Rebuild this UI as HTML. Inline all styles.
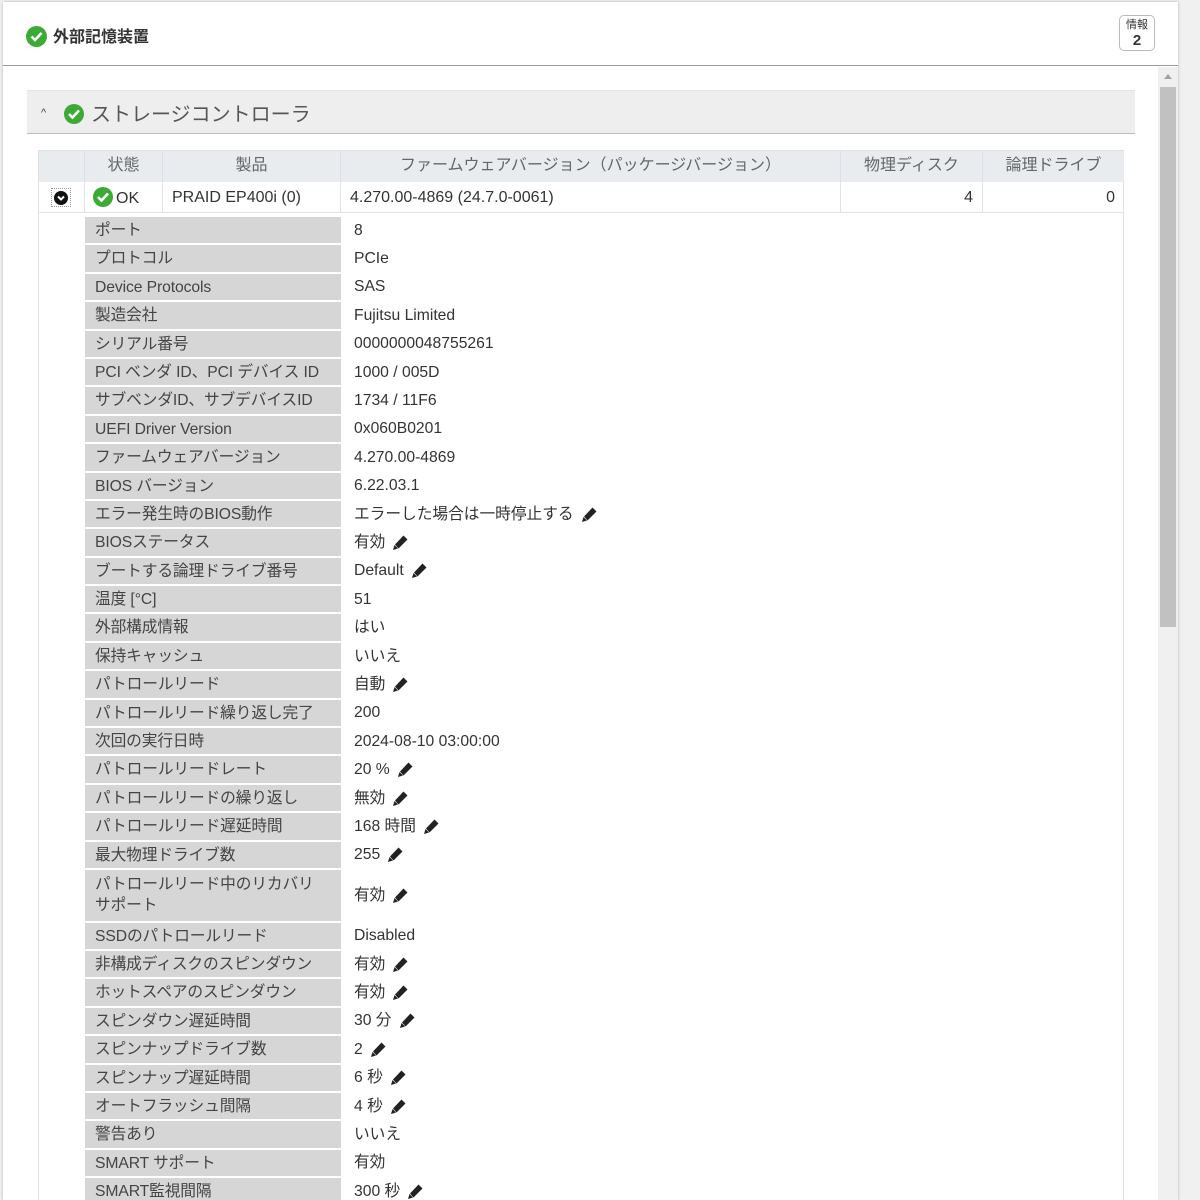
<!DOCTYPE html>
<html><head><meta charset="utf-8"><style>
*{box-sizing:border-box;margin:0;padding:0}
html,body{width:1200px;height:1200px;overflow:hidden}
body{background:#f0f0f0;font-family:"Liberation Sans","Noto Sans CJK JP",sans-serif;color:#444;position:relative}
.panel{position:absolute;left:3px;top:2px;width:1175px;height:1198px;overflow:hidden;background:#fff;box-shadow:0 0 3px rgba(0,0,0,.25)}
.top{height:64px;border-bottom:1px solid #999;position:relative}
.top .t{position:absolute;left:50px;top:21px;font-size:16px;font-weight:bold;color:#333}
.chk{position:absolute;width:21px;height:21px;border-radius:50%;background:#3daa35}
.chk svg{position:absolute;left:0;top:0}
.badge{position:absolute;left:1116px;top:13px;width:36px;height:36px;border:1px solid #bbb;border-radius:5px;text-align:center;font-size:11px;line-height:13px;color:#333;padding-top:3px}
.badge b{display:block;font-size:15px;line-height:17px}
.sb{position:absolute;left:1155px;top:65px;width:20px;height:1150px;background:#f0f0f0}
.sb .th{position:absolute;left:2px;top:20px;width:16px;height:540px;background:#c1c1c1}
.sb .ar{position:absolute;left:6px;top:7px;border:4px solid transparent;border-bottom:5px solid #a3a3a3;border-top:0}
.sec{position:absolute;left:24px;top:88px;width:1108px;height:44px;background:#eee;border-top:1px solid #e4e4e4;border-bottom:1px solid #bbb}
.sec .t{position:absolute;left:64px;top:7px;font-size:20px;color:#555}
.sec .car{position:absolute;left:14px;top:16px;font-size:11px;color:#444}
.tbl{position:absolute;left:35px;top:148px;width:1086px;height:1100px;border:1px solid #e0e0e0}
.hd{position:absolute;top:0;height:31px;background:#e9ecef;border-right:1px solid #dde;font-size:16px;color:#666;text-align:center;line-height:30px}
.rw{position:absolute;top:31px;height:31px;border-right:1px solid #e3e3e3;border-bottom:1px solid #e3e3e3;font-size:16px;color:#333;line-height:31px}
.det{position:absolute;left:46px;top:66px;width:1040px}
.r{display:flex;height:26.4px;margin-bottom:2px}
.r .l{width:256px;background:#d6d6d6;padding-left:10px;font-size:15.7px;line-height:28px;color:#444;white-space:nowrap;letter-spacing:-0.1px}
.r .v{padding-left:13px;font-size:15.7px;line-height:28px;color:#333;display:flex;align-items:center;padding-top:1px}
.r.d{height:50.6px}.r.d .l{line-height:21px;padding-top:4px}
.pen{margin-left:6px;width:18px;height:18px}
</style></head><body>
<svg width="0" height="0" style="position:absolute"><defs><g id="p"><path d="M12.5 1.5l4 4-9 9-3.5-4z" fill="#222"/><path d="M3.5 11l3.5 3.5-5 1.5z" fill="#222"/></g></defs></svg>
<div class="panel">
 <div class="top">
  <div class="chk" style="left:23px;top:24px"><svg width="21" height="21"><path d="M5.5 10.5l3.5 3.5 6.5-7" stroke="#fff" stroke-width="2.6" fill="none"/></svg></div>
  <div class="t">外部記憶装置</div>
  <div class="badge">情報<b>2</b></div>
 </div>
 <div class="sb"><div class="ar"></div><div class="th"></div></div>
 <div class="sec"><span class="car">^</span>
  <div class="chk" style="left:37px;top:13px;width:20px;height:20px"><svg width="20" height="20"><path d="M5 10l3.5 3.5 6.5-7" stroke="#fff" stroke-width="2.6" fill="none"/></svg></div>
  <div class="t">ストレージコントローラ</div></div>
 <div class="tbl">
  <div class="hd" style="left:0;width:46px"></div>
  <div class="hd" style="left:46px;width:78px">状態</div>
  <div class="hd" style="left:124px;width:178px">製品</div>
  <div class="hd" style="left:302px;width:500px">ファームウェアバージョン（パッケージバージョン）</div>
  <div class="hd" style="left:802px;width:142px">物理ディスク</div>
  <div class="hd" style="left:944px;width:141px;border-right:0">論理ドライブ</div>
  <div class="rw" style="left:0;width:46px"><div style="position:absolute;left:12px;top:6px;width:20px;height:19px;border:1px dotted #999"><div style="position:absolute;left:2px;top:2px;width:14px;height:14px;border-radius:50%;background:#111"><svg width="14" height="14" style="position:absolute;left:0;top:0"><path d="M4 5.5l3 3 3-3" stroke="#fff" stroke-width="2" fill="none"/></svg></div></div></div>
  <div class="rw" style="left:46px;width:78px"><div class="chk" style="left:8px;top:5px;width:20px;height:20px"><svg width="20" height="20"><path d="M5 10l3.5 3.5 6.5-7" stroke="#fff" stroke-width="2.6" fill="none"/></svg></div><span style="position:absolute;left:31px;top:1px">OK</span></div>
  <div class="rw" style="left:124px;width:178px;padding-left:9px">PRAID EP400i (0)</div>
  <div class="rw" style="left:302px;width:500px;padding-left:9px">4.270.00-4869 (24.7.0-0061)</div>
  <div class="rw" style="left:802px;width:142px;text-align:right;padding-right:9px">4</div>
  <div class="rw" style="left:944px;width:141px;text-align:right;padding-right:9px;border-right:0">0</div>
  <div class="det">
<div class="r"><div class="l">ポート</div><div class="v">8</div></div>
<div class="r"><div class="l">プロトコル</div><div class="v">PCIe</div></div>
<div class="r"><div class="l">Device Protocols</div><div class="v">SAS</div></div>
<div class="r"><div class="l">製造会社</div><div class="v">Fujitsu Limited</div></div>
<div class="r"><div class="l">シリアル番号</div><div class="v">0000000048755261</div></div>
<div class="r"><div class="l">PCI ベンダ ID、PCI デバイス ID</div><div class="v">1000 / 005D</div></div>
<div class="r"><div class="l">サブベンダID、サブデバイスID</div><div class="v">1734 / 11F6</div></div>
<div class="r"><div class="l">UEFI Driver Version</div><div class="v">0x060B0201</div></div>
<div class="r"><div class="l">ファームウェアバージョン</div><div class="v">4.270.00-4869</div></div>
<div class="r"><div class="l">BIOS バージョン</div><div class="v">6.22.03.1</div></div>
<div class="r"><div class="l">エラー発生時のBIOS動作</div><div class="v">エラーした場合は一時停止する<svg class="pen" viewBox="0 0 18 18"><use href="#p"/></svg></div></div>
<div class="r"><div class="l">BIOSステータス</div><div class="v">有効<svg class="pen" viewBox="0 0 18 18"><use href="#p"/></svg></div></div>
<div class="r"><div class="l">ブートする論理ドライブ番号</div><div class="v">Default<svg class="pen" viewBox="0 0 18 18"><use href="#p"/></svg></div></div>
<div class="r"><div class="l">温度 [°C]</div><div class="v">51</div></div>
<div class="r"><div class="l">外部構成情報</div><div class="v">はい</div></div>
<div class="r"><div class="l">保持キャッシュ</div><div class="v">いいえ</div></div>
<div class="r"><div class="l">パトロールリード</div><div class="v">自動<svg class="pen" viewBox="0 0 18 18"><use href="#p"/></svg></div></div>
<div class="r"><div class="l">パトロールリード繰り返し完了</div><div class="v">200</div></div>
<div class="r"><div class="l">次回の実行日時</div><div class="v">2024-08-10 03:00:00</div></div>
<div class="r"><div class="l">パトロールリードレート</div><div class="v">20 %<svg class="pen" viewBox="0 0 18 18"><use href="#p"/></svg></div></div>
<div class="r"><div class="l">パトロールリードの繰り返し</div><div class="v">無効<svg class="pen" viewBox="0 0 18 18"><use href="#p"/></svg></div></div>
<div class="r"><div class="l">パトロールリード遅延時間</div><div class="v">168 時間<svg class="pen" viewBox="0 0 18 18"><use href="#p"/></svg></div></div>
<div class="r"><div class="l">最大物理ドライブ数</div><div class="v">255<svg class="pen" viewBox="0 0 18 18"><use href="#p"/></svg></div></div>
<div class="r d"><div class="l">パトロールリード中のリカバリ<br>サポート</div><div class="v">有効<svg class="pen" viewBox="0 0 18 18"><use href="#p"/></svg></div></div>
<div class="r"><div class="l">SSDのパトロールリード</div><div class="v">Disabled</div></div>
<div class="r"><div class="l">非構成ディスクのスピンダウン</div><div class="v">有効<svg class="pen" viewBox="0 0 18 18"><use href="#p"/></svg></div></div>
<div class="r"><div class="l">ホットスペアのスピンダウン</div><div class="v">有効<svg class="pen" viewBox="0 0 18 18"><use href="#p"/></svg></div></div>
<div class="r"><div class="l">スピンダウン遅延時間</div><div class="v">30 分<svg class="pen" viewBox="0 0 18 18"><use href="#p"/></svg></div></div>
<div class="r"><div class="l">スピンナップドライブ数</div><div class="v">2<svg class="pen" viewBox="0 0 18 18"><use href="#p"/></svg></div></div>
<div class="r"><div class="l">スピンナップ遅延時間</div><div class="v">6 秒<svg class="pen" viewBox="0 0 18 18"><use href="#p"/></svg></div></div>
<div class="r"><div class="l">オートフラッシュ間隔</div><div class="v">4 秒<svg class="pen" viewBox="0 0 18 18"><use href="#p"/></svg></div></div>
<div class="r"><div class="l">警告あり</div><div class="v">いいえ</div></div>
<div class="r"><div class="l">SMART サポート</div><div class="v">有効</div></div>
<div class="r"><div class="l">SMART監視間隔</div><div class="v">300 秒<svg class="pen" viewBox="0 0 18 18"><use href="#p"/></svg></div></div>
  </div>
 </div>
</div>
</body></html>
